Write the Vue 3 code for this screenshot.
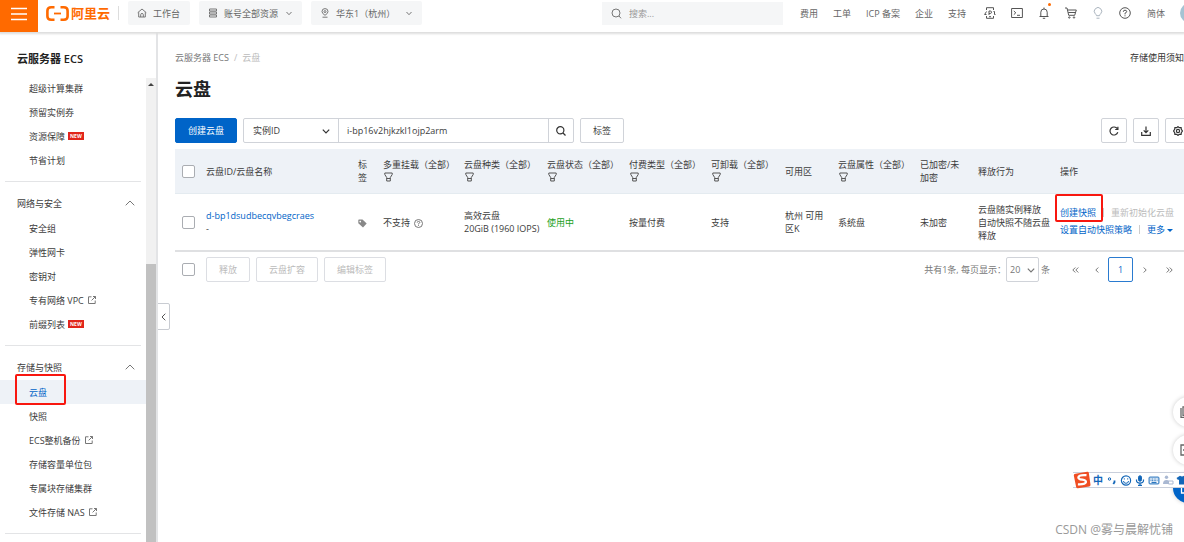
<script setup>
import { ref } from 'vue'

const navLinks = ['费用', '工单', 'ICP 备案', '企业', '支持']
const groups = [
  {
    items: [
      { text: '超级计算集群' },
      { text: '预留实例券' },
      { text: '资源保障', isNew: true },
      { text: '节省计划' },
    ],
  },
  {
    title: '网络与安全',
    items: [
      { text: '安全组' },
      { text: '弹性网卡' },
      { text: '密钥对' },
      { text: '专有网络 VPC', external: true },
      { text: '前缀列表', isNew: true },
    ],
  },
  {
    title: '存储与快照',
    items: [
      { text: '云盘', active: true },
      { text: '快照' },
      { text: 'ECS整机备份', external: true },
      { text: '存储容量单位包' },
      { text: '专属块存储集群' },
      { text: '文件存储 NAS', external: true },
    ],
  },
]
const columns = [
  { key: 'id', lines: ['云盘ID/云盘名称'] },
  { key: 'tag', lines: ['标', '签'] },
  { key: 'multi', lines: ['多重挂载（全部）'], filter: true },
  { key: 'kind', lines: ['云盘种类（全部）'], filter: true },
  { key: 'state', lines: ['云盘状态（全部）'], filter: true },
  { key: 'pay', lines: ['付费类型（全部）'], filter: true },
  { key: 'detach', lines: ['可卸载（全部）'], filter: true },
  { key: 'zone', lines: ['可用区'] },
  { key: 'attr', lines: ['云盘属性（全部）'], filter: true },
  { key: 'crypt', lines: ['已加密/未', '加密'] },
  { key: 'release', lines: ['释放行为'] },
  { key: 'ops', lines: ['操作'] },
]
const keyword = ref('i-bp16v2hjkzkl1ojp2arm')
</script>

<template>
  <div class="page">
    <header class="topbar">
      <button class="burger" aria-label="菜单">
        <svg width="16" height="14" viewBox="0 0 16 14"><path d="M0 1.500h16M0 7h16M0 12.500h16" stroke="#fff" stroke-width="1.600" /></svg>
      </button>
      <a class="logo" href="#">
        <svg width="23" height="15" viewBox="0 0 23 15" stroke="#ff6a00">
          <path d="M8.500 1.300H5.200Q1.400 1.300 1.400 4.800V10.200Q1.400 13.700 5.200 13.700H8.500M14.500 1.300H17.800Q21.600 1.300 21.600 4.800V10.200Q21.600 13.700 17.800 13.700H14.500" stroke-width="2.600" />
          <path d="M8 7.500h7" stroke-width="1.800" />
        </svg>
        <span>阿里云</span>
      </a>
      <i class="bar-sep"></i>
      <button class="chip">
        <svg width="10" height="10" viewBox="0 0 10 10" class="line"><path d="M.7 4.700 5 1l4.300 3.700M1.700 4.200V9h6.600V4.200M3.700 9V6.500q0-1 1.300-1t1.300 1V9" /></svg>
        工作台
      </button>
      <button class="chip">
        <svg width="10" height="10" viewBox="0 0 10 10" class="line"><path d="M1.500 1h7v2h-7zM1.500 4h7v2h-7zM1.500 7h7v2h-7z" /></svg>
        账号全部资源
        <svg width="6" height="5" viewBox="0 0 6 5" class="line chev"><path d="M.5 1 3 3.700 5.500 1" /></svg>
      </button>
      <button class="chip region">
        <svg width="10" height="10" viewBox="0 0 10 10" class="line"><path d="M5 7.300Q2 5.500 2 3.500a3 2.900 0 0 1 6 0Q8 5.500 5 7.300zM2.500 9.200h5" /><circle cx="5" cy="3.600" r="1" /></svg>
        华东1（杭州）
        <svg width="6" height="5" viewBox="0 0 6 5" class="line chev"><path d="M.5 1 3 3.700 5.500 1" /></svg>
      </button>
      <label class="search">
        <svg width="11" height="11" viewBox="0 0 11 11" class="line"><circle cx="5" cy="5" r="4" /><path d="m8 8 2 2.300" /></svg>
        <input type="text" placeholder="搜索..." aria-label="搜索" />
      </label>
      <nav class="topnav">
        <a v-for="l in navLinks" :key="l" href="#">{{ l }}</a>
      </nav>
      <div class="tools">
        <button aria-label="应用"><svg width="12" height="12" viewBox="0 0 12 12" class="tool"><path d="M2.500 3V.7h7V3M2.500 9v2.300h7V9M2.500 4.500 .6 7.500h1.900M9.500 4.500h1v3h1M5 8V4h1.300q1.200 0 1.200 1.200T6.300 6.500H5M5 9.700h2" /></svg></button>
        <button aria-label="命令行"><svg width="12" height="12" viewBox="0 0 12 12" class="tool"><path d="M.6 1.500h10.800v9H.6zM2.800 4l2 1.800-2 1.800M6 8.300h3" /></svg></button>
        <button aria-label="通知" class="bell"><svg width="12" height="12" viewBox="0 0 12 12" class="tool"><path d="M1.500 9.500h9M2.800 9.500V5.200Q2.800 2 6 2t3.200 3.200v4.300M6 2V.5M4.800 11.300h2.400" /></svg></button>
        <button aria-label="购物车"><svg width="12" height="12" viewBox="0 0 12 12" class="tool"><path d="M0 1h2l1.700 7.300h6L11.300 3H2.600M3.200 5.500h7.300" /><circle cx="4.300" cy="10.500" r=".7" /><circle cx="9" cy="10.500" r=".7" /></svg></button>
        <button aria-label="提示"><svg width="12" height="12" viewBox="0 0 12 12" class="tool pale"><path d="M4.500 8.700Q4.300 7.600 3.300 6.800A3.700 3.700 0 1 1 8.700 6.800Q7.700 7.600 7.500 8.700zM4.500 11.200h3" /></svg></button>
        <button aria-label="帮助"><svg width="12" height="12" viewBox="0 0 12 12" class="tool"><circle cx="6" cy="6" r="5.300" /><path d="M4.300 4.800Q4.300 3.200 6 3.200t1.700 1.500Q7.700 5.600 6 6.200v1.200M6 8.300v1" /></svg></button>
      </div>
      <a class="lang" href="#">简体</a>
      <span class="avatar"></span>
    </header>

    <div class="body">
      <aside class="side">
        <h2>云服务器 ECS</h2>
        <div class="scroll">
          <div class="menu">
            <section v-for="(g, i) in groups" :key="i">
              <button v-if="g.title" class="group">
                {{ g.title }}
                <svg width="10" height="6" viewBox="0 0 10 6" class="line"><path d="M.7 5.300 5 1l4.300 4.300" /></svg>
              </button>
              <ul>
                <li v-for="it in g.items" :key="it.text" :class="{ active: it.active }">
                  <a href="#">{{ it.text }}</a>
                  <b v-if="it.isNew" class="new">NEW</b>
                  <svg v-if="it.external" width="8" height="8" viewBox="0 0 8 8" class="line ext"><path d="M3.500 .8H.5v6.700h6.700V4.500M5 .5h2.500V3M7.500.5 3.600 4.400" /></svg>
                </li>
              </ul>
            </section>
          </div>
          <div class="track"><i class="up"></i><i class="thumb"></i></div>
        </div>
      </aside>

      <main class="main">
        <button class="fold" aria-label="收起"><svg width="5" height="8" viewBox="0 0 5 8"><path d="M4.300.7 1 4l3.300 3.300" stroke="#555" /></svg></button>
        <div class="content">
          <div class="crumbs">
            <a href="#">云服务器 ECS</a><span>/</span><span>云盘</span>
            <a class="notice" href="#">存储使用须知</a>
          </div>
          <h1>云盘</h1>

          <div class="toolbar">
            <button class="btn primary">创建云盘</button>
            <div class="combo">
              <span class="pick">
                <select aria-label="筛选字段"><option>实例ID</option></select>
                <svg width="8" height="5" viewBox="0 0 8 5"><path d="M.8.7 4 4 7.200.7" /></svg>
              </span>
              <input v-model="keyword" type="text" aria-label="实例ID" />
              <button aria-label="查询"><svg width="10" height="10" viewBox="0 0 10 10"><circle cx="4.300" cy="4.300" r="3.600" /><path d="m7 7 2.500 2.500" /></svg></button>
            </div>
            <button class="btn">标签</button>
            <div class="right">
              <button class="sq" aria-label="刷新"><svg width="10" height="10" viewBox="0 0 10 10"><path d="M8.300 2.700A4 4 0 1 0 8.800 6.300M8.900.8v2.700H6.200" /></svg></button>
              <button class="sq" aria-label="下载"><svg width="10" height="10" viewBox="0 0 10 10"><path d="M.7 6v3.300h8.600V6M5 .5v6M2.700 4.300 5 6.600l2.300-2.300" /></svg></button>
              <button class="sq" aria-label="设置"><svg width="10" height="10" viewBox="0 0 10 10"><path d="M5 .6 6.200 1.700 8.100 1.600 8.300 3.400 9.400 5 8.300 6.600 8.100 8.400 6.200 8.300 5 9.400 3.800 8.300 1.900 8.400 1.700 6.600.6 5 1.700 3.400 1.900 1.600 3.800 1.700z" /><circle cx="5" cy="5" r="1.600" /></svg></button>
            </div>
          </div>

          <table>
            <colgroup>
              <col class="c-check" /><col v-for="c in columns" :key="c.key" :class="'c-' + c.key" />
            </colgroup>
            <thead>
              <tr>
                <th class="check"><input type="checkbox" aria-label="全选" /></th>
                <th v-for="c in columns" :key="c.key">
                  <span v-for="l in c.lines" :key="l" class="ln">{{ l }}</span>
                  <svg v-if="c.filter" width="9" height="10" viewBox="0 0 9 10" class="filter"><path d="M.8 1h7.400v1.500L6.300 5.500V9H2.700V5.500L.8 2.500zM2.700 6.500h3.600" /></svg>
                </th>
              </tr>
            </thead>
            <tbody>
              <tr>
                <td class="check"><input type="checkbox" aria-label="选择云盘" /></td>
                <td><a class="ln" href="#">d-bp1dsudbecqvbegcraes</a><span class="ln">-</span></td>
                <td><svg width="9" height="9" viewBox="0 0 9 9" class="tagicon"><path d="M.3 1.200Q.3.500 1 .5h3.500L8.700 4.500 5 8.600.3 4.300zM2.200 1.700a.8.8 0 1 0 .1 0z" fill="#888" fill-rule="evenodd" /></svg></td>
                <td class="multi">不支持 <svg width="9" height="9" viewBox="0 0 9 9" class="line"><circle cx="4.500" cy="4.500" r="4" /><path d="M3.200 3.600q0-1.200 1.300-1.200t1.300 1.100Q5.800 4.200 4.500 4.700v.7M4.500 6.100v.8" /></svg></td>
                <td><span class="ln">高效云盘</span><span class="ln">20GiB (1960 IOPS)</span></td>
                <td class="ok">使用中</td>
                <td>按量付费</td>
                <td>支持</td>
                <td><span class="ln">杭州 可用</span><span class="ln">区K</span></td>
                <td>系统盘</td>
                <td>未加密</td>
                <td><span class="ln">云盘随实例释放</span><span class="ln">自动快照不随云盘</span><span class="ln">释放</span></td>
                <td class="ops">
                  <div><a class="marked" href="#">创建快照</a><i></i><span class="off">重新初始化云盘</span></div>
                  <div><a href="#">设置自动快照策略</a><i></i><a href="#">更多<em></em></a></div>
                </td>
              </tr>
            </tbody>
          </table>

          <div class="foot">
            <input type="checkbox" aria-label="全选本页" />
            <button class="btn" disabled>释放</button>
            <button class="btn" disabled>云盘扩容</button>
            <button class="btn" disabled>编辑标签</button>
            <div class="pager">
              <label for="size">共有1条, 每页显示：</label>
              <span class="pick size">
                <select id="size"><option>20</option></select>
                <svg width="8" height="5" viewBox="0 0 8 5"><path d="M.8.7 4 4 7.200.7" /></svg>
              </span>
              <span class="unit">条</span>
              <button aria-label="首页"><svg width="7" height="6" viewBox="0 0 7 6"><path d="M3.300.5.8 3l2.500 2.500M6.300.5 3.800 3l2.500 2.500" /></svg></button>
              <button aria-label="上一页"><svg width="4" height="6" viewBox="0 0 4 6"><path d="M3.300.5.8 3l2.500 2.500" /></svg></button>
              <button class="cur">1</button>
              <button aria-label="下一页"><svg width="4" height="6" viewBox="0 0 4 6"><path d="M.7.5 3.200 3 .7 5.500" /></svg></button>
              <button aria-label="末页"><svg width="7" height="6" viewBox="0 0 7 6"><path d="M.7.5 3.200 3 .7 5.500M3.700.5 6.200 3 3.700 5.500" /></svg></button>
            </div>
          </div>
        </div>
      </main>
    </div>

    <div class="floats">
      <button aria-label="文档"><svg width="12" height="12" viewBox="0 0 12 12"><path d="M1 2v9.300h8M3 .8h8v8.500H3z" /></svg></button>
      <button aria-label="反馈"><svg width="12" height="12" viewBox="0 0 12 12"><path d="M1 1h10v10H1zM3 6h3" /></svg></button>
      <button class="chat" aria-label="客服"><svg width="12" height="12" viewBox="0 0 12 12"><path d="M1.500 5h9v6h-9z" /></svg></button>
    </div>

    <div class="ime">
      <svg class="sogou" width="18" height="18" viewBox="0 0 18 18"><path d="M2.500 2.800 14.300.8q1.300-.2 1.500 1l1.700 12q.2 1.400-1.200 1.600l-11.400 1.900q-1.400.2-1.700-1.100L.8 4.500Q.6 3.100 2.500 2.800z" fill="#f04e23" /><path d="M13.500 4.200Q6 3.600 5.400 6.300q-.2 1.800 4 2.400 4 .6 3.500 2.500-.8 2.600-8 2.200" stroke="#fff" stroke-width="2.300" fill="none" /></svg>
      <b>中</b>
      <svg height="9" viewBox="0 0 9 9" stroke="#1266b8"><circle cx="2" cy="3" r="1.200" /><path d="M7 4.500v1.700L5.800 8" stroke-width="1.800" /></svg>
      <svg height="11" viewBox="0 0 11 11" stroke="#1266b8"><circle cx="5.500" cy="5.500" r="4.600" stroke-width="1.200" /><path d="M3 6q0 2.300 2.500 2.300T8 6M3.800 3.300v1.200M7.200 3.300v1.200" /></svg>
      <svg height="11" viewBox="0 0 9 11" stroke="#1266b8"><rect x="3" y=".8" width="3" height="5.400" rx="1.500" fill="#1266b8" /><path d="M1 4.500v1Q1 8 4.500 8T8 5.500v-1M4.500 8v2M2.500 10.300h4" stroke-width="1.200" /></svg>
      <svg height="9" viewBox="0 0 11 9" stroke="#1266b8"><rect x=".6" y="1.100" width="9.800" height="6.800" rx=".8" /><path d="M2 3h7M2 4.700h7" stroke-dasharray="1 .6" /><path d="M3 6.400h5" /></svg>
      <svg height="10" viewBox="0 0 11 10"><circle cx="4" cy="2.300" r="1.700" fill="#a9b8d2" /><path d="M.5 9Q.5 5 4 5q2 0 2.500 1v3z" fill="#a9b8d2" /><path d="M6 6h4.500v3H6z" fill="#fff" stroke="#a9b8d2" /></svg>
      <svg height="10" viewBox="0 0 11 10"><path d="M3.500.8Q5.500 2.300 7.500.8L11 3 9.500 5 8.500 4.500V9.500h-6V4.500L1.500 5 0 3z" fill="#1266b8" /></svg>
    </div>
    <div class="mark">CSDN @雾与晨解忧铺</div>
  </div>
</template>

<style>
html, body { margin: 0; background: #fff; overflow: hidden; }
</style>

<style scoped>
.page {
  position: relative; display: flex; flex-direction: column; height: 100vh; overflow: hidden;
  font: 9px/13px "Open Sans", "Noto Sans CJK SC", sans-serif; color: #3c3c3c;
}
.page *, .page *::after { box-sizing: border-box; }
button, input, select { font: inherit; color: inherit; margin: 0; padding: 0; border: 0; background: none; outline: none; }
a { color: inherit; text-decoration: none; }
ul { list-style: none; margin: 0; padding: 0; }
svg { flex: none; fill: none; }
.line { stroke: #777; stroke-width: 1; }

.topbar { display: flex; align-items: center; height: 32px; padding-bottom: 6px; flex: none; color: #666; box-shadow: 0 1px 2px 1px #ddd; position: relative; z-index: 1; white-space: nowrap; }
.burger { align-self: flex-start; width: 38px; height: 32px; flex: none; background: #ff6a00; display: grid; place-items: center; padding-bottom: 4px; }
.logo { display: flex; align-items: center; gap: 2px; margin-left: 8px; color: #ff6a00; font-size: 13px; font-weight: 700; }
.bar-sep { width: 1px; height: 14px; background: #ddd; margin: 0 9px 0 8px; }
.chip { display: flex; align-items: center; gap: 6px; height: 24px; padding: 0 10px 0 9px; margin-right: 9px; background: #f5f6f7; border-radius: 2px; flex: none; }
.chip .chev { margin-left: 2px; }
.region .chev { margin-left: 5px; }
.search { display: flex; align-items: center; gap: 7px; width: 181px; height: 23px; padding: 0 9px; margin-left: auto; background: #f5f6f7; }
.search input { width: 100%; }
.search input::placeholder { color: #999; opacity: 1; }
.topnav { display: flex; gap: 15px; margin: 0 18px 0 17px; }
.tools { display: flex; gap: 15px; margin-right: 16px; }
.tools button { display: grid; place-items: center; width: 12px; height: 14px; }
.tool { stroke: #555; stroke-width: 1; }
.pale { stroke: #aab4be; }
.bell { position: relative; }
.bell::after { content: ""; position: absolute; right: -1px; top: -3px; width: 3px; height: 3px; border-radius: 50%; background: #ff6a00; }
.avatar { width: 20px; height: 20px; margin: 0 -16px 0 15px; border-radius: 50%; background: #a5c3d3; flex: none; }

.body { display: flex; flex: 1; min-height: 0; }
.side { width: 158px; flex: none; display: flex; flex-direction: column; border-right: 2px solid #e3e4e6; }
.side h2 { margin: 19px 0 11px 17px; font-size: 11px; line-height: 16px; font-weight: 600; color: #222; }
.scroll { display: flex; flex: 1; min-height: 0; overflow: hidden; }
.menu { flex: 1; margin-top: -2px; }
section { position: relative; padding-bottom: 9px; margin-bottom: 9px; }
section::after { content: ""; display: block; height: 1px; margin: 9px 5px -10px; background: #e3e4e6; }
section + section { padding-top: 1px; }
.group { display: flex; align-items: center; justify-content: space-between; width: 100%; height: 24px; margin-bottom: 1px; padding: 0 11px 0 17px; }
li { display: flex; align-items: center; height: 24px; padding-left: 29px; gap: 3px; white-space: nowrap; }
li.active { position: relative; background: #eef2f7; color: #0064c8; }
li.active::after { content: ""; position: absolute; left: 15px; top: -6px; width: 51px; height: 31px; border: 2px solid #f8170f; border-radius: 2px; }
.new { background: #e1251b; color: #fff; font-size: 5px; line-height: 8px; padding: 0 2px; }
.ext { margin-left: 1px; }
.track { width: 10px; background: #f1f1f1; display: flex; flex-direction: column; }
.up { margin: 5px auto 0; border: 3px solid transparent; border-top: 0; border-bottom: 3px solid #444; }
.thumb { margin-top: 178px; flex: 1; background: #c1c1c1; }

.main { position: relative; flex: 1; min-width: 0; overflow: hidden; }
.fold { position: absolute; left: -1px; top: 271px; width: 13px; height: 27px; border: 1px solid #c9ccd2; border-radius: 0 2px 2px 0; display: grid; place-items: center; }
.content { margin: 0 -7px 0 17px; }
.crumbs { display: flex; gap: 5px; margin-top: 19px; color: #777; }
.crumbs span { color: #bbb; }
.notice { margin-left: auto; margin-right: 7px; color: #333; }
h1 { margin: 13px 0 16px; font-size: 18px; line-height: 25px; font-weight: 700; color: #222; }
.toolbar { display: flex; height: 25px; gap: 6px; }
.btn { padding: 0 12px; height: 25px; border: 1px solid #d0d3d9; border-radius: 2px; background: #fff; }
.btn.primary { background: #0064c8; border-color: #0064c8; color: #fff; }
.btn:disabled { color: #bbb; border-color: #dcdee3; }
.combo { display: flex; width: 331px; border: 1px solid #d0d3d9; border-radius: 2px; }
.combo > input { flex: 1; min-width: 0; padding: 0 8px; border: solid #d0d3d9; border-width: 0 1px; }
.combo > button { width: 24px; display: grid; place-items: center; }
.pick { position: relative; width: 94px; }
.pick select { appearance: none; width: 100%; height: 100%; padding-left: 9px; }
.pick svg { position: absolute; right: 8px; top: calc(50% - 2px); pointer-events: none; }
.combo svg, .right svg, .pick svg { stroke: #333; stroke-width: 1.2; }
.right { display: flex; gap: 6px; margin-left: auto; }
.sq { width: 26px; border: 1px solid #d0d3d9; border-radius: 2px; display: grid; place-items: center; }

table { width: 100%; table-layout: fixed; border-collapse: separate; border-spacing: 0; margin-top: 6px; border-bottom: 2px solid #dfe0e2; }
th, td { padding: 0 5px; text-align: left; font-weight: 400; vertical-align: middle; white-space: nowrap; }
th { height: 45px; background: #eef2f7; border-bottom: 1px solid #e4ebf0; }
td { height: 56px; }
.ln { display: block; }
.check { padding-left: 7px; }
input[type="checkbox"] { appearance: none; display: block; width: 13px; height: 13px; border: 1px solid #aaadb2; border-radius: 2px; background: #fff; flex: none; }
.c-check { width: 26px; } .c-id { width: 152px; } .c-tag { width: 25px; } .c-multi { width: 81px; }
.c-kind { width: 83px; } .c-state { width: 82px; } .c-pay { width: 82px; } .c-detach { width: 74px; }
.c-zone { width: 53px; } .c-attr { width: 82px; } .c-crypt { width: 58px; } .c-release { width: 82px; }
.filter { display: block; stroke: #555; margin: 1px 0 2px 1px; }
.multi svg, .tagicon { vertical-align: middle; }
.multi svg { margin-left: 2px; }
td a { color: #0064c8; }
.ok { color: #1aa01a; }
.ops { padding-bottom: 2px; }
.ops div { display: flex; align-items: center; line-height: 17px; }
.ops i { width: 1px; height: 9px; background: #ccc; margin: 0 7px; }
.ops .off { color: #bbb; }
.ops em { display: inline-block; border: 3px solid transparent; border-top-color: #0064c8; border-bottom: 0; margin-left: 2px; vertical-align: middle; }
.marked { position: relative; }
.marked::after { content: ""; position: absolute; left: -5px; top: -10px; width: 48px; height: 28px; border: 2px solid #f8170f; border-radius: 2px; }

.foot { display: flex; align-items: center; gap: 6px; margin: 5px 0 0 7px; }
.foot > input { margin-right: 5px; }
.pager { display: flex; align-items: center; margin: 0 10px 0 auto; color: #777; }
.size { width: 33px; height: 25px; border: 1px solid #d0d3d9; border-radius: 2px; }
.size select { padding-left: 3px; }
.size svg { right: 3px; stroke: #777; }
.unit { margin: 0 14px 0 2px; }
.pager button { display: grid; place-items: center; width: 22px; height: 25px; }
.pager button svg { stroke: #777; }
.pager .cur { width: 25px; border: 1px solid #2a7bd0; border-radius: 2px; color: #0064c8; }
.pager .cur ~ button { width: 24px; }

.floats { position: absolute; right: -19px; top: 397px; display: flex; flex-direction: column; gap: 8px; }
.floats button { width: 30px; height: 30px; padding-left: 7px; border-radius: 50%; background: #fff; box-shadow: 0 0 4px #ccc; display: flex; align-items: center; }
.floats svg { stroke: #666; stroke-width: 1.3; }
.floats .chat { background: #0064c8; }
.floats .chat svg { stroke: #fff; }
.ime { position: absolute; right: -5px; bottom: 54px; display: flex; align-items: center; height: 16px; background: #fff; border: solid #c9cfdb; border-width: 1px 0; }
.ime svg, .ime b { width: 14px; text-align: center; }
.ime .sogou { width: 18px; }
.ime b { color: #1266b8; line-height: 14px; font-size: 10px; }
.mark { position: absolute; right: 11px; bottom: 3px; font-size: 12px; line-height: 18px; color: #999; }
</style>
